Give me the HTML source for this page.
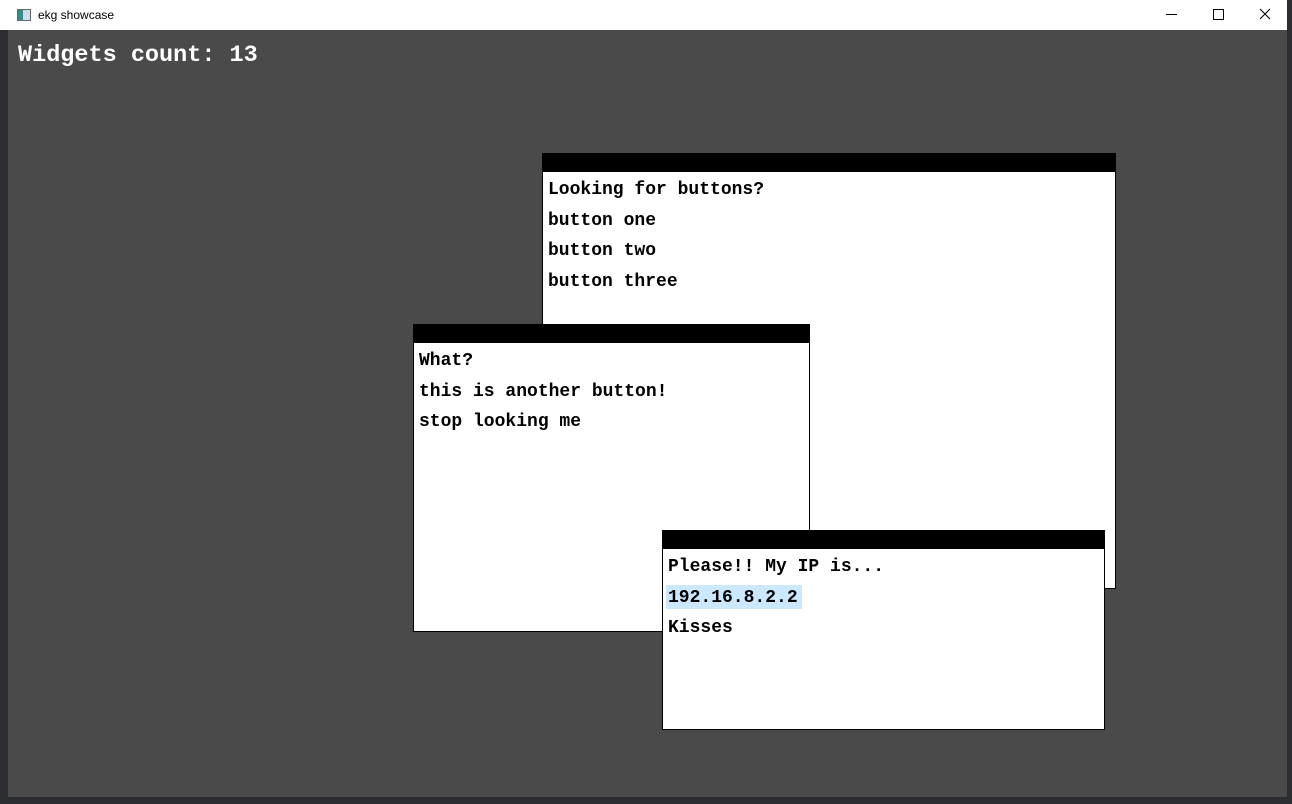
<!DOCTYPE html>
<html><head><style>
body{margin:0;width:1292px;height:804px;background:#2b2d30;position:relative;overflow:hidden;font-family:"Liberation Mono",monospace;}
.title{position:absolute;left:0;top:0;width:1287px;height:30px;background:#fff;}
.title span{position:absolute;left:38px;top:8px;font:12px "Liberation Sans",sans-serif;color:#000;}
.ico{position:absolute;left:17px;top:9px;width:12px;height:10px;border:1px solid #666;background:linear-gradient(90deg,#3a8a8a 40%,#cde 40%);}
.client{position:absolute;left:8px;top:30px;width:1279px;height:767px;background:#4a4a4a;}
.hdr{position:absolute;left:18px;top:42px;color:#fff;font-weight:bold;font-size:23.5px;}
.w{position:absolute;background:#fff;border:1px solid #000;box-sizing:border-box;}
.w .bar{height:18px;background:#000;}
.w .t{position:absolute;left:5px;font-weight:bold;font-size:18px;color:#000;line-height:22px;}
</style></head><body>
<div class="title"><div class="ico"></div><span>ekg showcase</span>
<div style="position:absolute;left:1166px;top:14px;width:11px;height:1px;background:#000"></div>
<div style="position:absolute;left:1213px;top:9px;width:9px;height:9px;border:1px solid #000"></div>
<svg style="position:absolute;left:1259px;top:8px" width="12" height="12"><path d="M1 1L11 11M11 1L1 11" stroke="#000" stroke-width="1.1"/></svg>
</div>
<div class="client"></div>
<div class="hdr">Widgets count: 13</div>
<div class="w" style="left:542px;top:153px;width:574px;height:436px"><div class="bar"></div>
<div class="t" style="top:25px">Looking for buttons?</div>
<div class="t" style="top:56px">button one</div>
<div class="t" style="top:86px">button two</div>
<div class="t" style="top:117px">button three</div></div>
<div class="w" style="left:413px;top:324px;width:397px;height:308px"><div class="bar"></div>
<div class="t" style="top:25px">What?</div>
<div class="t" style="top:56px">this is another button!</div>
<div class="t" style="top:86px">stop looking me</div></div>
<div class="w" style="left:662px;top:530px;width:443px;height:200px"><div class="bar"></div>
<div class="t" style="top:25px">Please!! My IP is...</div>
<div style="position:absolute;left:3px;top:54px;width:136px;height:24px;background:#cce8ff"></div>
<div class="t" style="top:56px">192.16.8.2.2</div>
<div class="t" style="top:86px">Kisses</div></div>
</body></html>
